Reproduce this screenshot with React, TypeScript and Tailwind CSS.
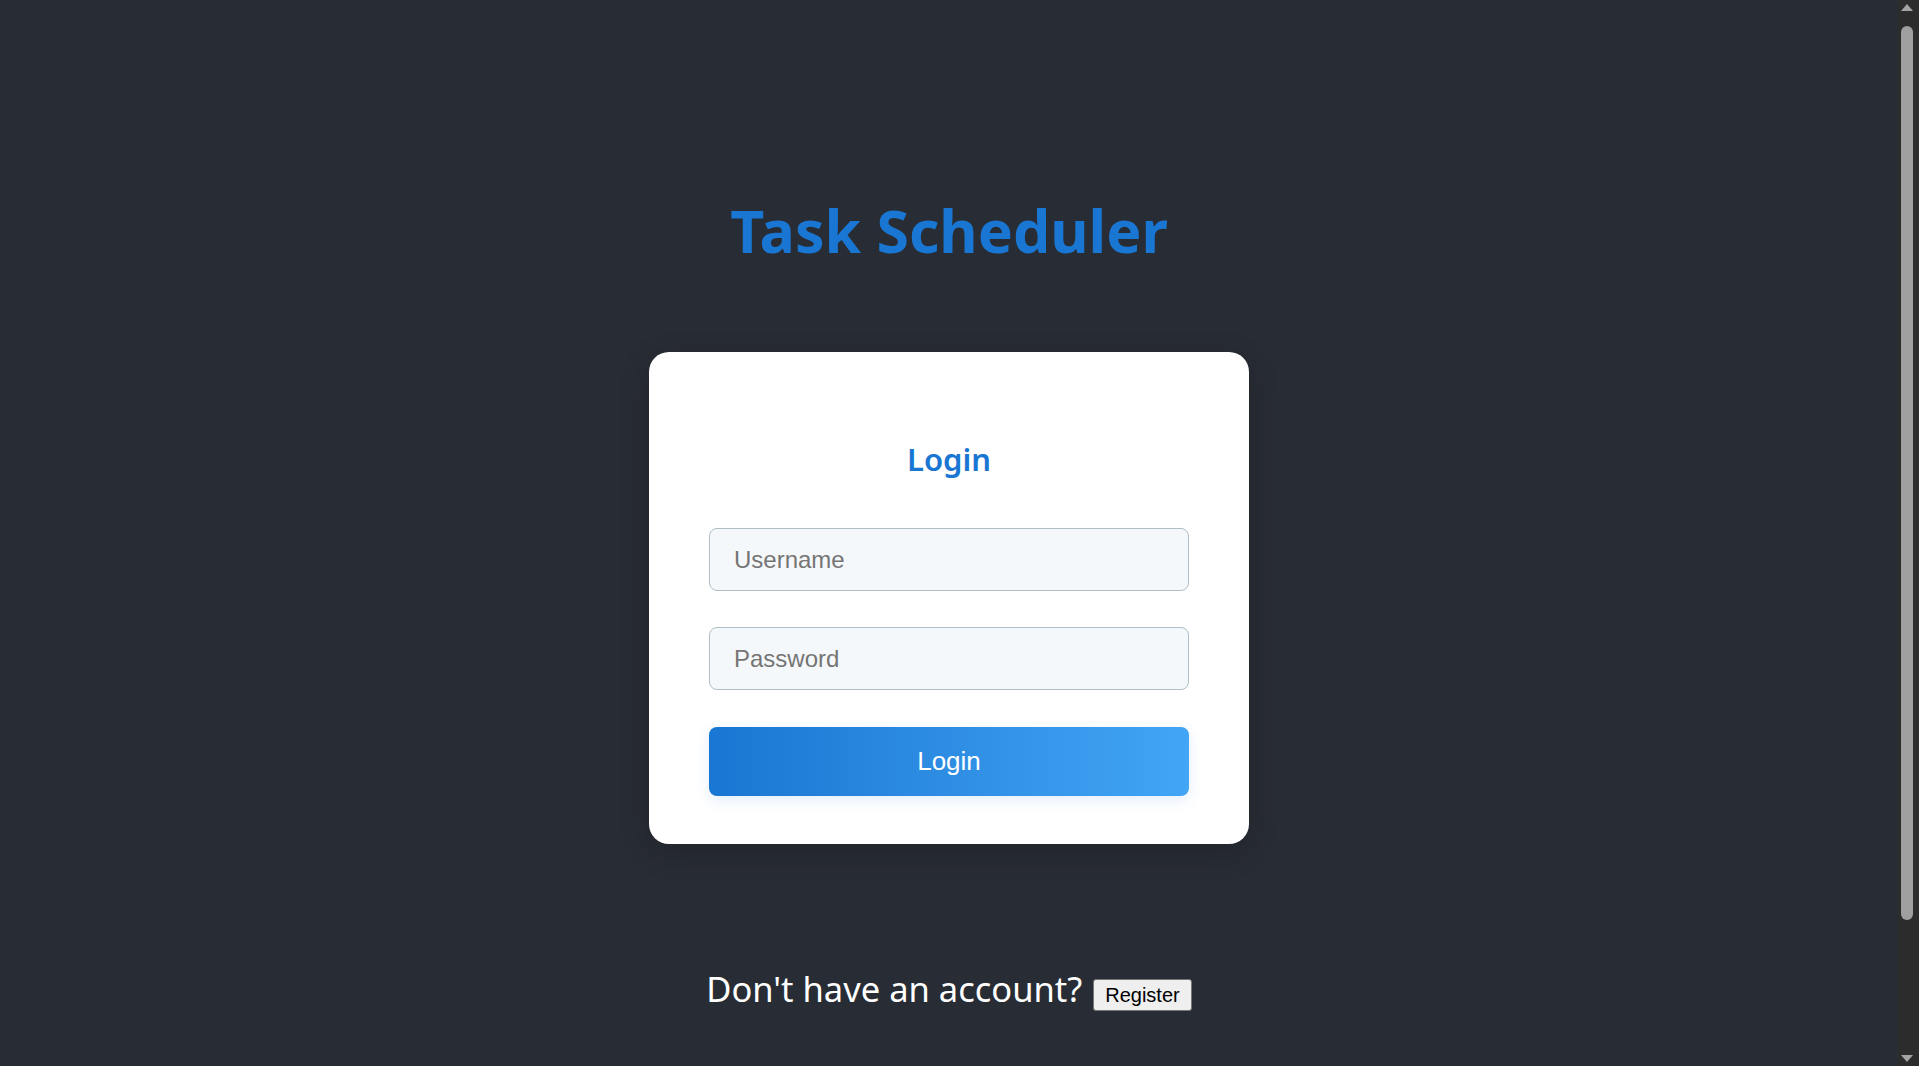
import { useState } from "react";

const inputClass =
  "h-[63px] w-full rounded-lg border border-[#b0bec5] bg-[#f5f8fa] px-[24px] font-['Liberation_Sans',Arial,sans-serif] text-[24px] text-[#333] placeholder:text-[#757575] outline-none";

export default function App() {
  const [username, setUsername] = useState("");
  const [password, setPassword] = useState("");

  return (
    <div className="flex min-h-screen bg-[#282c34]">
      <main className="flex flex-1 flex-col items-center pt-[201px] pb-[223px] font-['Noto_Sans',sans-serif]">
        <h1 className="text-[59px] leading-none font-bold text-[#1976d2]">Task Scheduler</h1>

        <div className="mt-[92px] flex w-[600px] flex-col rounded-[20px] bg-white px-[60px] pt-[92px] pb-[48px] shadow-[0_8px_30px_rgba(0,0,0,0.18)]">
          <h2 className="text-center text-[31px] leading-none font-semibold text-[#1976d2]">Login</h2>

          <input
            type="text"
            placeholder="Username"
            value={username}
            onChange={(e) => setUsername(e.target.value)}
            className={`mt-[53px] ${inputClass}`}
          />
          <input
            type="password"
            placeholder="Password"
            value={password}
            onChange={(e) => setPassword(e.target.value)}
            className={`mt-[36px] ${inputClass}`}
          />

          <button className="mt-[37px] h-[69px] w-full rounded-lg bg-gradient-to-r from-[#1976d2] to-[#42a5f5] font-['Liberation_Sans',Arial,sans-serif] text-[26px] text-white shadow-[0_4px_14px_rgba(25,118,210,0.12)]">
            Login
          </button>
        </div>

        <div className="mt-[128px] flex items-baseline justify-center">
          <span className="text-[34.5px] leading-none text-white">Don't have an account?</span>
          <button className="ml-[11px] rounded-[3px] border border-[#767676] bg-[#efefef] px-[11px] py-[5px] font-['Liberation_Sans',Arial,sans-serif] text-[20px] leading-none text-black">
            Register
          </button>
        </div>
      </main>

      {/* page scrollbar */}
      <div className="sticky top-0 flex h-screen w-[21px] shrink-0 flex-col bg-[#2c2c2c]">
        <svg width="21" height="17" viewBox="0 0 21 17" className="shrink-0">
          <polygon points="3,11 9,4 15,11" fill="#a3a3a3" />
        </svg>
        <div className="mt-[9px] ml-[3px] h-[894px] w-[12px] rounded-full bg-[#9f9f9f]" />
        <div className="flex-1" />
        <svg width="21" height="17" viewBox="0 0 21 17" className="shrink-0">
          <polygon points="3,6 9,13 15,6" fill="#a3a3a3" />
        </svg>
      </div>
    </div>
  );
}
